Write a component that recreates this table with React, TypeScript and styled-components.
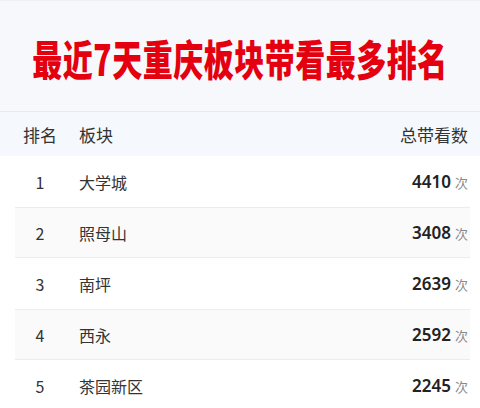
import { createGlobalStyle, styled } from 'styled-components';

const GlobalStyle = createGlobalStyle`
  html, body {
    margin: 0;
    padding: 0;
    background: #ffffff;
  }
  body {
    font-family: 'Noto Sans CJK SC', 'Noto Sans', sans-serif;
  }
`;

const Page = styled.div`
  width: 480px;
  height: 408px;
  overflow: hidden;
  background: #ffffff;
`;

const TitleBar = styled.div`
  height: 112px;
  display: flex;
  align-items: center;
  justify-content: center;
  background: #f6f8fb;
  border-top: 1px solid #edf0f4;
  border-bottom: 1px solid #e6eaef;
  box-sizing: border-box;
`;

const Title = styled.h1`
  margin: 0;
  font-size: 30px;
  font-weight: 900;
  color: #e4000f;
  letter-spacing: 0.5px;
  transform: scaleY(1.42);
  padding-top: 2px;
  white-space: nowrap;
`;

const Grid = styled.div`
  display: grid;
  grid-template-columns: 50px 1fr auto;
  column-gap: 14px;
  align-items: center;
`;

const HeaderRow = styled(Grid)`
  height: 44px;
  padding: 0 12px 0 15px;
  background: #f5f8fc;
  font-size: 17px;
  color: #333333;
`;

const Rank = styled.div`
  text-align: center;
  font-size: 16px;
  color: #333333;
`;

const HeadRank = styled.div`
  text-align: center;
`;

const Row = styled(Grid)<{ $shaded: boolean }>`
  height: 51px;
  margin: 0 10px 0 15px;
  padding-right: 2px;
  background: ${(p) => (p.$shaded ? '#fafafa' : '#ffffff')};
  border-top: 1px solid ${(p) => (p.$shaded ? '#ececec' : 'transparent')};
  border-bottom: 1px solid ${(p) => (p.$shaded ? '#ececec' : 'transparent')};
  box-sizing: border-box;
`;

const Name = styled.div`
  font-size: 16px;
  color: #333333;
`;

const Count = styled.div`
  display: flex;
  align-items: baseline;
  gap: 4px;
`;

const Num = styled.span`
  font-family: 'Noto Sans', sans-serif;
  font-size: 17px;
  font-weight: 600;
  color: #222222;
`;

const Unit = styled.span`
  font-size: 13px;
  color: #888888;
`;

const rows = [
  { rank: 1, name: '大学城', count: 4410 },
  { rank: 2, name: '照母山', count: 3408 },
  { rank: 3, name: '南坪', count: 2639 },
  { rank: 4, name: '西永', count: 2592 },
  { rank: 5, name: '茶园新区', count: 2245 },
];

function App() {
  return (
    <Page>
      <GlobalStyle />
      <TitleBar>
        <Title>最近7天重庆板块带看最多排名</Title>
      </TitleBar>
      <HeaderRow>
        <HeadRank>排名</HeadRank>
        <div>板块</div>
        <div>总带看数</div>
      </HeaderRow>
      {rows.map((r) => (
        <Row key={r.rank} $shaded={r.rank % 2 === 0}>
          <Rank>{r.rank}</Rank>
          <Name>{r.name}</Name>
          <Count>
            <Num>{r.count}</Num>
            <Unit>次</Unit>
          </Count>
        </Row>
      ))}
    </Page>
  );
}

export default App;
